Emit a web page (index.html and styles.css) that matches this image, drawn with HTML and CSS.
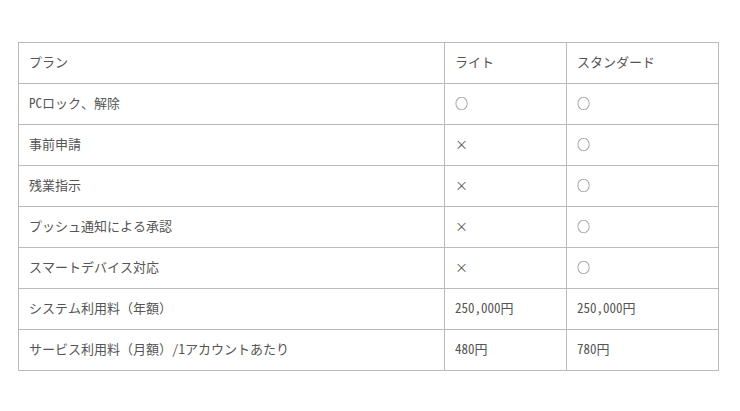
FILE: index.html
```html
<!DOCTYPE html>
<html lang="ja">
<head>
<meta charset="utf-8">
<link rel="stylesheet" href="styles.css">
</head>
<body>
<table class="plans">
  <tr><td class="c1">プラン</td><td class="c2">ライト</td><td class="c3">スタンダード</td></tr>
  <tr><td>PCロック、解除</td><td>○</td><td>○</td></tr>
  <tr><td>事前申請</td><td>×</td><td>○</td></tr>
  <tr><td>残業指示</td><td>×</td><td>○</td></tr>
  <tr><td>プッシュ通知による承認</td><td>×</td><td>○</td></tr>
  <tr><td>スマートデバイス対応</td><td>×</td><td>○</td></tr>
  <tr><td>システム利用料（年額）</td><td>250,000円</td><td>250,000円</td></tr>
  <tr><td>サービス利用料（月額）/1アカウントあたり</td><td>480円</td><td>780円</td></tr>
</table>
</body>
</html>
```
FILE: styles.css
```css
html, body { background: #fff; }
body {
  margin: 0;
  padding: 42px 18px 0;
  font-family: "Noto Sans Mono CJK JP", "Noto Sans CJK JP", monospace;
  font-size: 13px;
  color: #555;
}
.plans {
  border-collapse: collapse;
  width: 700px;
  table-layout: fixed;
}
.plans td {
  border: 1px solid #bbb;
  height: 41px;
  box-sizing: border-box;
  padding: 0 10px 4px;
  vertical-align: middle;
  line-height: 1;
}
.plans .c1 { width: 426px; }
.plans .c2 { width: 122px; }
.plans .c3 { width: 152px; }
```
